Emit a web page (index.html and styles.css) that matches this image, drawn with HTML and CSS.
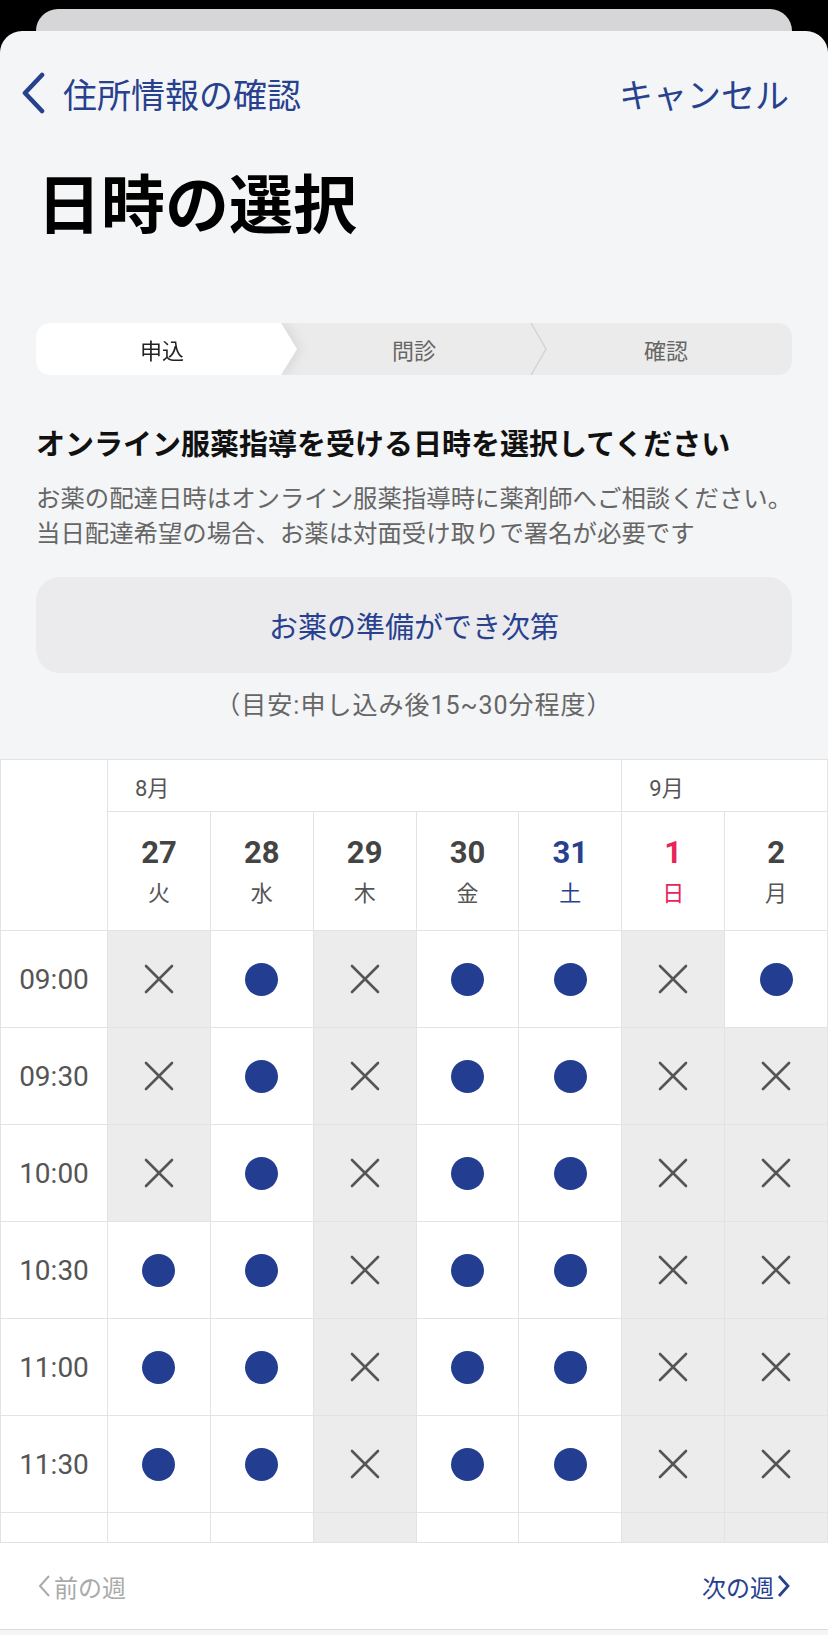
FILE: index.html
```html
<!doctype html>
<html lang="ja">
<head>
<meta charset="UTF-8">
<title>日時の選択</title>
<link rel="stylesheet" href="styles.css">
</head>
<body>
<svg class="defs" width="0" height="0">
	<symbol id="batsu" viewBox="0 0 30 30"><path d="M2 2L28 28M28 2L2 28" stroke="#555" stroke-width="2.6" stroke-linecap="round" fill="none"/></symbol>
</svg>

<div class="sheet-back"></div>
<div class="sheet">
	<!-- ナビゲーション -->
	<div class="nav">
		<a class="nav-back">
			<svg width="26" height="42" viewBox="0 0 26 42"><path d="M22 3L5 21L22 39" stroke="#27418f" stroke-width="4.6" stroke-linecap="round" stroke-linejoin="round" fill="none"/></svg>
			住所情報の確認
		</a>
		<a class="nav-cancel">キャンセル</a>
	</div>

	<h1 class="title">日時の選択</h1>

	<!-- ステップ -->
	<div class="steps">
		<div class="step-now"><span>申込</span></div>
		<div class="step">問診
			<svg class="step-sep" width="18" height="52" viewBox="0 0 18 52"><path d="M1 0L16 26L1 52" stroke="#d4d4d6" stroke-width="1.5" fill="none"/></svg>
		</div>
		<div class="step">確認</div>
	</div>

	<h2 class="lead">オンライン服薬指導を受ける日時を選択してください</h2>
	<p class="desc">お薬の配達日時はオンライン服薬指導時に薬剤師へご相談ください。<br>当日配達希望の場合、お薬は対面受け取りで署名が必要です</p>

	<a class="asap">お薬の準備ができ次第</a>
	<p class="asap-note">（目安:申し込み後15~30分程度）</p>

	<!-- カレンダー -->
	<div class="cal">
		<div class="cal-head">
			<div class="corner"></div>
			<div class="month m8">8月</div>
			<div class="month m9">9月</div>
			<div class="day"><b>27</b><span>火</span></div>
			<div class="day"><b>28</b><span>水</span></div>
			<div class="day"><b>29</b><span>木</span></div>
			<div class="day"><b>30</b><span>金</span></div>
			<div class="day sat"><b>31</b><span>土</span></div>
			<div class="day sun"><b>1</b><span>日</span></div>
			<div class="day"><b>2</b><span>月</span></div>
		</div>

		<div class="slots">
			<div class="row">
				<div class="time">09:00</div>
				<div class="slot off"><svg class="x"><use href="#batsu"/></svg></div>
				<div class="slot"><i class="dot"></i></div>
				<div class="slot off"><svg class="x"><use href="#batsu"/></svg></div>
				<div class="slot"><i class="dot"></i></div>
				<div class="slot"><i class="dot"></i></div>
				<div class="slot off"><svg class="x"><use href="#batsu"/></svg></div>
				<div class="slot"><i class="dot"></i></div>
			</div>
			<div class="row">
				<div class="time">09:30</div>
				<div class="slot off"><svg class="x"><use href="#batsu"/></svg></div>
				<div class="slot"><i class="dot"></i></div>
				<div class="slot off"><svg class="x"><use href="#batsu"/></svg></div>
				<div class="slot"><i class="dot"></i></div>
				<div class="slot"><i class="dot"></i></div>
				<div class="slot off"><svg class="x"><use href="#batsu"/></svg></div>
				<div class="slot off"><svg class="x"><use href="#batsu"/></svg></div>
			</div>
			<div class="row">
				<div class="time">10:00</div>
				<div class="slot off"><svg class="x"><use href="#batsu"/></svg></div>
				<div class="slot"><i class="dot"></i></div>
				<div class="slot off"><svg class="x"><use href="#batsu"/></svg></div>
				<div class="slot"><i class="dot"></i></div>
				<div class="slot"><i class="dot"></i></div>
				<div class="slot off"><svg class="x"><use href="#batsu"/></svg></div>
				<div class="slot off"><svg class="x"><use href="#batsu"/></svg></div>
			</div>
			<div class="row">
				<div class="time">10:30</div>
				<div class="slot"><i class="dot"></i></div>
				<div class="slot"><i class="dot"></i></div>
				<div class="slot off"><svg class="x"><use href="#batsu"/></svg></div>
				<div class="slot"><i class="dot"></i></div>
				<div class="slot"><i class="dot"></i></div>
				<div class="slot off"><svg class="x"><use href="#batsu"/></svg></div>
				<div class="slot off"><svg class="x"><use href="#batsu"/></svg></div>
			</div>
			<div class="row">
				<div class="time">11:00</div>
				<div class="slot"><i class="dot"></i></div>
				<div class="slot"><i class="dot"></i></div>
				<div class="slot off"><svg class="x"><use href="#batsu"/></svg></div>
				<div class="slot"><i class="dot"></i></div>
				<div class="slot"><i class="dot"></i></div>
				<div class="slot off"><svg class="x"><use href="#batsu"/></svg></div>
				<div class="slot off"><svg class="x"><use href="#batsu"/></svg></div>
			</div>
			<div class="row">
				<div class="time">11:30</div>
				<div class="slot"><i class="dot"></i></div>
				<div class="slot"><i class="dot"></i></div>
				<div class="slot off"><svg class="x"><use href="#batsu"/></svg></div>
				<div class="slot"><i class="dot"></i></div>
				<div class="slot"><i class="dot"></i></div>
				<div class="slot off"><svg class="x"><use href="#batsu"/></svg></div>
				<div class="slot off"><svg class="x"><use href="#batsu"/></svg></div>
			</div>
			<!-- スクロールで隠れている行 -->
			<div class="row">
				<div class="time"></div>
				<div class="slot"></div>
				<div class="slot"></div>
				<div class="slot off"></div>
				<div class="slot"></div>
				<div class="slot"></div>
				<div class="slot off"></div>
				<div class="slot off"></div>
			</div>
		</div>

		<div class="week-nav">
			<a class="prev"><svg width="16" height="26" viewBox="0 0 16 26"><path d="M13 3L4 13L13 23" stroke="#aaa" stroke-width="2" fill="none"/></svg>前の週</a>
			<a class="next">次の週<svg width="16" height="26" viewBox="0 0 16 26"><path d="M3 3L12 13L3 23" stroke="#27418f" stroke-width="2.8" fill="none"/></svg></a>
		</div>
	</div>
</div>
</body>
</html>
```

FILE: styles.css
```css
body,div,p,h1,h2{margin:0;padding:0;}
a{text-decoration:none;}
body{background:#000;font-family:"Roboto","Noto Sans CJK JP",sans-serif;color:#222;}
.defs{position:absolute;}

.sheet-back{height:22px;margin:9px 36px 0;background:#d6d6d8;border-radius:22px 22px 0 0;}
.sheet{height:1604px;background:#f4f5f7;border-radius:22px 22px 0 0;overflow:hidden;}

/* ナビ */
.nav{display:flex;justify-content:space-between;align-items:center;height:44px;margin-top:40px;padding:0 39px 0 20px;font-size:34px;color:#27418f;}
.nav-back{display:flex;align-items:center;gap:17px;color:#27418f;}
.nav-cancel{color:#27418f;}

.title{margin:54px 0 0 37px;font-size:64px;line-height:76px;font-weight:700;color:#000;}

/* ステップ */
.steps{display:grid;grid-template-columns:repeat(3,1fr);height:52px;margin:78px 36px 0;background:#ebebeb;border-radius:14px;overflow:hidden;font-size:22px;color:#666;}
.step,.step-now{display:flex;align-items:center;justify-content:center;position:relative;}
.step-now{justify-content:flex-start;filter:drop-shadow(4px 0 6px rgba(0,0,0,0.08));z-index:1;}
.step-now span{display:flex;align-items:center;justify-content:center;flex-shrink:0;width:calc(100% + 9px);height:100%;padding-right:9px;box-sizing:border-box;background:#fff;color:#222;
	clip-path:polygon(0 0,calc(100% - 16px) 0,100% 50%,calc(100% - 16px) 100%,0 100%);}
.step-sep{position:absolute;right:-8px;top:0;}

.lead{margin:50px 36px 0;font-size:29px;line-height:40px;font-weight:700;color:#111;}
.desc{margin:16px 0 0 36px;font-size:24.4px;line-height:35px;white-space:nowrap;color:#666;}

.asap{display:flex;align-items:center;justify-content:center;height:96px;margin:26px 36px 0;background:#ebebed;border-radius:24px;font-size:29px;color:#27418f;}
.asap-note{margin-top:15px;text-align:center;font-size:25px;line-height:35px;letter-spacing:1px;color:#666;}

/* カレンダー */
.cal{margin-top:36px;background:#fff;}
.cal-head,.row{display:grid;grid-template-columns:107px repeat(7,1fr);border-left:1px solid #e3e3e3;}
.cal-head{border-top:1px solid #e3e3e3;grid-template-rows:52px 119px;}
.cal-head div,.row div{border-right:1px solid #e3e3e3;border-bottom:1px solid #e3e3e3;}
.corner{grid-row:1 / 3;}
.month{display:flex;align-items:center;padding-left:27px;font-size:22px;color:#555;}
.m8{grid-column:2 / 7;}
.m9{grid-column:7 / 9;}
.day{display:flex;flex-direction:column;align-items:center;padding-top:23px;color:#555;}
.day b{font-size:31px;line-height:36px;font-weight:700;color:#444;}
.day span{margin-top:8px;font-size:22px;line-height:30px;}
.day.sat b,.day.sat span{color:#27418f;}
.day.sun b,.day.sun span{color:#e8245a;}

.slots{height:611px;overflow:hidden;}
.row{height:97px;}
.time{display:flex;align-items:center;justify-content:center;font-size:28px;color:#555;}
.slot{display:flex;align-items:center;justify-content:center;}
.slot.off{background:#ececec;}
.x{width:30px;height:30px;}
.dot{width:33px;height:33px;border-radius:50%;background:#233e91;}

.week-nav{display:flex;justify-content:space-between;align-items:center;height:86px;padding:0 36px;border-top:1px solid #e3e3e3;border-bottom:1px solid #dcdcdc;font-size:24px;}
.prev{display:flex;align-items:center;gap:2px;color:#aaa;}
.next{display:flex;align-items:center;gap:2px;color:#27418f;}
```
